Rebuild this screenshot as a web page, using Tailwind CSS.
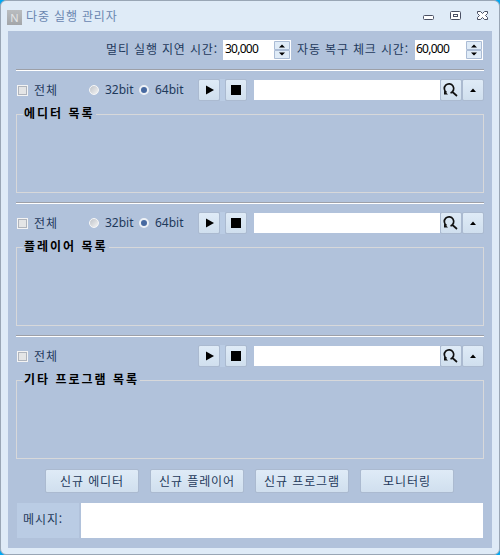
<!DOCTYPE html>
<html lang="ko">
<head>
  <meta charset="UTF-8">
  <title>다중 실행 관리자</title>
  <script src="https://cdn.jsdelivr.net/npm/@tailwindcss/browser@4"></script>
</head>
<body class="bg-[#00a8f3] overflow-hidden">

  <div class="w-[500px] h-[555px] rounded-md border border-[#99a6b5] bg-[#dfebf7] px-[7px] pb-[6px] flex flex-col font-['Noto_Sans','Noto_Sans_CJK_KR',sans-serif] text-[12px] leading-[20px] text-[#1e395b] whitespace-nowrap">

    <!-- title bar -->
    <header class="h-[30px] shrink-0 flex items-center">
      <div class="w-[15px] h-[15px] mt-[2px] -ml-px bg-linear-to-b from-[#b9bcbf] to-[#a3a6a9] text-[#e3e5e7] text-[11px] leading-[15px] text-center">N</div>
      <h1 class="ml-[4px] text-[#6a86b0] font-['Noto_Sans_CJK_KR'] tracking-[0.85px]">다중 실행 관리자</h1>
      <svg class="ml-auto mr-[2px]" width="68" height="12" viewBox="0 0 68 12" fill="none" stroke="#4a5063">
        <rect x="1.5" y="5.5" width="10" height="4" rx="1" fill="#fff" />
        <rect x="28.5" y="1.5" width="10" height="8" rx="1" fill="#fff" />
        <rect x="31.5" y="4.500" width="4" height="2" />
        <path d="M55.500 1.500h3l2 2 2-2h3v2l-2 2 2 2v2h-3l-2-2-2 2h-3v-2l2-2-2-2z" fill="#fff" />
      </svg>
    </header>

    <main class="flex-1 bg-[#b1c2db] px-[8px] pt-[9px] flex flex-col">

      <!-- delay settings -->
      <div class="flex h-[20px] justify-end mr-px">
        <span class="font-['Noto_Sans_CJK_KR'] tracking-[0.85px] w-[117px] leading-[18px]">멀티 실행 지연 시간:</span>
        <div class="w-[68px] bg-white flex justify-between text-black">
          <span class="pl-[2px] leading-[17px] tracking-[-0.75px]">30,000</span>
          <svg class="mt-px mr-px" width="16" height="18" viewBox="0 0 16 18">
            <path d="M.5.5h15v8H.5zM.5 9.500h15v8H.5z" fill="#dfebf7" stroke="#abbcd5" />
            <path d="M5 6.500h6L8 3.500zM5 11.500h6l-3 3z" />
          </svg>
        </div>
        <span class="font-['Noto_Sans_CJK_KR'] tracking-[0.85px] w-[118px] ml-[6px] leading-[18px]">자동 복구 체크 시간:</span>
        <div class="w-[68px] bg-white flex justify-between text-black">
          <span class="pl-px leading-[17px] tracking-[-0.75px]">60,000</span>
          <svg class="mt-px mr-px" width="16" height="18" viewBox="0 0 16 18">
            <path d="M.5.5h15v8H.5zM.5 9.500h15v8H.5z" fill="#dfebf7" stroke="#abbcd5" />
            <path d="M5 6.500h6L8 3.500zM5 11.500h6l-3 3z" />
          </svg>
        </div>
      </div>

      <!-- editor list -->
      <section class="h-[133px] mt-[9px]">
        <div class="h-[2px] border-t border-t-[#9da0a8] border-b border-b-white"></div>
        <div class="flex h-[22px] mt-[8px]">
          <div class="w-[182px] flex items-center">
            <i class="w-[11px] h-[11px] ml-px border-2 border-[#f4f4f4] bg-[#e4e5e6] outline -outline-offset-2 outline-[#b0b5bd]"></i>
            <span class="ml-[6px] w-[54px] font-['Noto_Sans_CJK_KR'] tracking-[0.9px] -mt-px">전체</span>
            <i class="w-[10px] h-[10px] ml-px rounded-full border border-[#f7f7f7] bg-linear-to-br from-[#bfc3c9] to-[#f4f4f4]"></i>
            <span class="ml-[6px] w-[34px]">32bit</span>
            <i class="w-[10px] h-[10px] rounded-full border-2 border-[#edf1f6] bg-[#4769a0]"></i>
            <span class="ml-[6px]">64bit</span>
          </div>
          <div class="w-[22px] rounded-[2px] border border-[#abbad0] bg-linear-to-b from-[#dfebf7] to-[#d0dfee]">
            <svg width="20" height="20"><path d="M7 5.500v9l8-4.500z" /></svg>
          </div>
          <div class="w-[5px] bg-[#bacce4]"></div>
          <div class="w-[22px] rounded-[2px] border border-[#abbad0] bg-linear-to-b from-[#dfebf7] to-[#d0dfee]">
            <svg width="20" height="20"><path d="M5 5h10v10H5z" /></svg>
          </div>
          <div class="w-[186px] h-[20px] ml-[7px] mt-px bg-white"></div>
          <div class="w-[22px] rounded-[2px] border border-[#abbad0] bg-linear-to-b from-[#dfebf7] to-[#d0dfee]">
            <svg width="20" height="20" fill="none" stroke="#111" stroke-width="1.700">
              <path d="M5.500 12.500A4.700 4.700 0 1 1 9.500 13M11.500 12l4.500 4" />
              <path d="M3 10.500v4h4z" fill="#111" stroke="none" />
            </svg>
          </div>
          <div class="w-[22px] rounded-[2px] border border-[#abbad0] bg-linear-to-b from-[#dfebf7] to-[#d0dfee]">
            <svg width="20" height="20"><path d="M7 12h6l-3-3.500z" /></svg>
          </div>
        </div>
        <fieldset class="h-[86px] mt-[6px] w-[468px] border border-[#d7d8da] pl-[6px]">
          <legend class="h-[14px] leading-[12px] px-px text-black font-bold font-['Noto_Sans_CJK_KR'] tracking-[2px]">에디터 목록</legend>
        </fieldset>
      </section>

      <!-- player list -->
      <section class="h-[133px]">
        <div class="h-[2px] border-t border-t-[#9da0a8] border-b border-b-white"></div>
        <div class="flex h-[22px] mt-[8px]">
          <div class="w-[182px] flex items-center">
            <i class="w-[11px] h-[11px] ml-px border-2 border-[#f4f4f4] bg-[#e4e5e6] outline -outline-offset-2 outline-[#b0b5bd]"></i>
            <span class="ml-[6px] w-[54px] font-['Noto_Sans_CJK_KR'] tracking-[0.9px] -mt-px">전체</span>
            <i class="w-[10px] h-[10px] ml-px rounded-full border border-[#f7f7f7] bg-linear-to-br from-[#bfc3c9] to-[#f4f4f4]"></i>
            <span class="ml-[6px] w-[34px]">32bit</span>
            <i class="w-[10px] h-[10px] rounded-full border-2 border-[#edf1f6] bg-[#4769a0]"></i>
            <span class="ml-[6px]">64bit</span>
          </div>
          <div class="w-[22px] rounded-[2px] border border-[#abbad0] bg-linear-to-b from-[#dfebf7] to-[#d0dfee]">
            <svg width="20" height="20"><path d="M7 5.500v9l8-4.500z" /></svg>
          </div>
          <div class="w-[5px] bg-[#bacce4]"></div>
          <div class="w-[22px] rounded-[2px] border border-[#abbad0] bg-linear-to-b from-[#dfebf7] to-[#d0dfee]">
            <svg width="20" height="20"><path d="M5 5h10v10H5z" /></svg>
          </div>
          <div class="w-[186px] h-[20px] ml-[7px] mt-px bg-white"></div>
          <div class="w-[22px] rounded-[2px] border border-[#abbad0] bg-linear-to-b from-[#dfebf7] to-[#d0dfee]">
            <svg width="20" height="20" fill="none" stroke="#111" stroke-width="1.700">
              <path d="M5.500 12.500A4.700 4.700 0 1 1 9.500 13M11.500 12l4.500 4" />
              <path d="M3 10.500v4h4z" fill="#111" stroke="none" />
            </svg>
          </div>
          <div class="w-[22px] rounded-[2px] border border-[#abbad0] bg-linear-to-b from-[#dfebf7] to-[#d0dfee]">
            <svg width="20" height="20"><path d="M7 12h6l-3-3.500z" /></svg>
          </div>
        </div>
        <fieldset class="h-[86px] mt-[6px] w-[468px] border border-[#d7d8da] pl-[6px]">
          <legend class="h-[14px] leading-[12px] px-px text-black font-bold font-['Noto_Sans_CJK_KR'] tracking-[2px]">플레이어 목록</legend>
        </fieldset>
      </section>

      <!-- other programs, no 32/64bit choice -->
      <section class="h-[133px]">
        <div class="h-[2px] border-t border-t-[#9da0a8] border-b border-b-white"></div>
        <div class="flex h-[22px] mt-[8px]">
          <div class="w-[182px] flex items-center">
            <i class="w-[11px] h-[11px] ml-px border-2 border-[#f4f4f4] bg-[#e4e5e6] outline -outline-offset-2 outline-[#b0b5bd]"></i>
            <span class="ml-[6px] w-[54px] font-['Noto_Sans_CJK_KR'] tracking-[0.9px] -mt-px">전체</span>
          </div>
          <div class="w-[22px] rounded-[2px] border border-[#abbad0] bg-linear-to-b from-[#dfebf7] to-[#d0dfee]">
            <svg width="20" height="20"><path d="M7 5.500v9l8-4.500z" /></svg>
          </div>
          <div class="w-[5px] bg-[#bacce4]"></div>
          <div class="w-[22px] rounded-[2px] border border-[#abbad0] bg-linear-to-b from-[#dfebf7] to-[#d0dfee]">
            <svg width="20" height="20"><path d="M5 5h10v10H5z" /></svg>
          </div>
          <div class="w-[186px] h-[20px] ml-[7px] mt-px bg-white"></div>
          <div class="w-[22px] rounded-[2px] border border-[#abbad0] bg-linear-to-b from-[#dfebf7] to-[#d0dfee]">
            <svg width="20" height="20" fill="none" stroke="#111" stroke-width="1.700">
              <path d="M5.500 12.500A4.700 4.700 0 1 1 9.500 13M11.500 12l4.500 4" />
              <path d="M3 10.500v4h4z" fill="#111" stroke="none" />
            </svg>
          </div>
          <div class="w-[22px] rounded-[2px] border border-[#abbad0] bg-linear-to-b from-[#dfebf7] to-[#d0dfee]">
            <svg width="20" height="20"><path d="M7 12h6l-3-3.500z" /></svg>
          </div>
        </div>
        <fieldset class="h-[86px] mt-[6px] w-[468px] border border-[#d7d8da] pl-[6px]">
          <legend class="h-[14px] leading-[12px] px-px text-black font-bold font-['Noto_Sans_CJK_KR'] tracking-[2px]">기타 프로그램 목록</legend>
        </fieldset>
      </section>

      <!-- actions -->
      <div class="flex gap-[11px] ml-[29px] mt-px font-['Noto_Sans_CJK_KR'] tracking-[0.9px] text-center">
        <button class="w-[94px] h-[24px] leading-[19px] pb-px rounded-[2px] border border-[#abbad0] bg-linear-to-b from-[#dfebf7] to-[#d0dfee]">신규 에디터</button>
        <button class="w-[94px] h-[24px] leading-[19px] pb-px rounded-[2px] border border-[#abbad0] bg-linear-to-b from-[#dfebf7] to-[#d0dfee]">신규 플레이어</button>
        <button class="w-[94px] h-[24px] leading-[19px] pb-px rounded-[2px] border border-[#abbad0] bg-linear-to-b from-[#dfebf7] to-[#d0dfee]">신규 프로그램</button>
        <button class="w-[94px] h-[24px] leading-[19px] pb-px rounded-[2px] border border-[#abbad0] bg-linear-to-b from-[#dfebf7] to-[#d0dfee]">모니터링</button>
      </div>

      <div class="flex h-[35px] mt-[10px] ml-px">
        <span class="w-[62px] bg-[#bacce4] pl-[6px] leading-[32px] font-['Noto_Sans_CJK_KR'] tracking-[0.9px]">메시지:</span>
        <div class="w-[402px] ml-[2px] bg-white"></div>
      </div>
    </main>
  </div>

</body>
</html>
